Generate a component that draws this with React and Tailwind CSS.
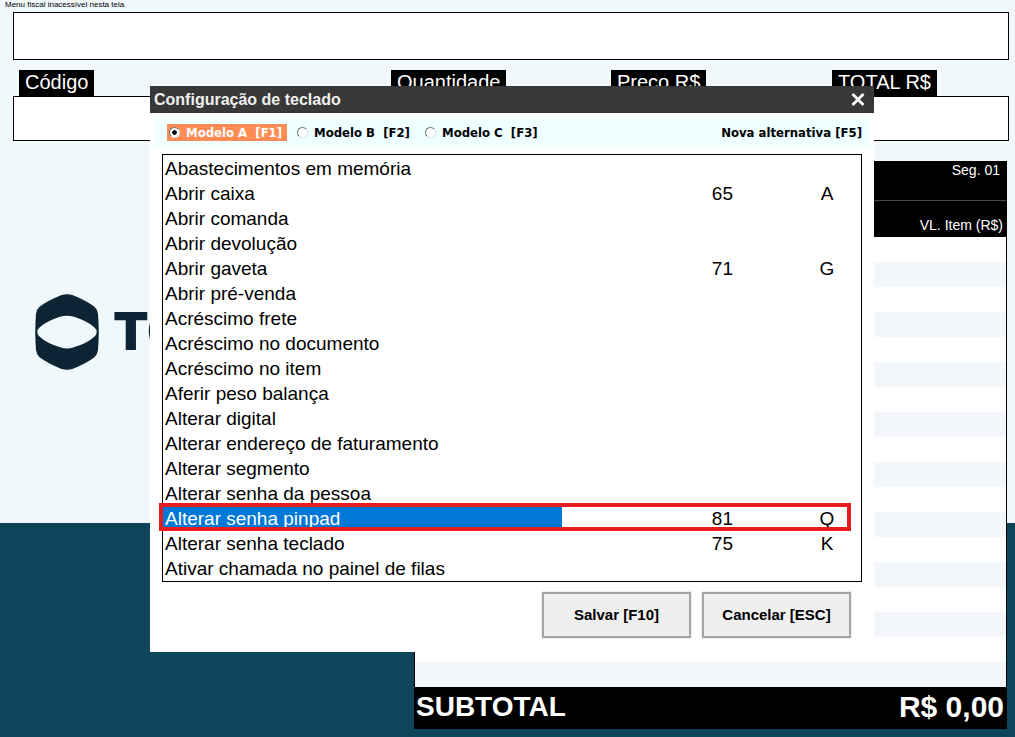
import { useState } from "react";

const COMMANDS = [
  { name: "Abastecimentos em memória" },
  { name: "Abrir caixa", code: 65, key: "A" },
  { name: "Abrir comanda" },
  { name: "Abrir devolução" },
  { name: "Abrir gaveta", code: 71, key: "G" },
  { name: "Abrir pré-venda" },
  { name: "Acréscimo frete" },
  { name: "Acréscimo no documento" },
  { name: "Acréscimo no item" },
  { name: "Aferir peso balança" },
  { name: "Alterar digital" },
  { name: "Alterar endereço de faturamento" },
  { name: "Alterar segmento" },
  { name: "Alterar senha da pessoa" },
  { name: "Alterar senha pinpad", code: 81, key: "Q" },
  { name: "Alterar senha teclado", code: 75, key: "K" },
  { name: "Ativar chamada no painel de filas" },
];

const MODELS = [
  { id: "A", shortcut: "F1" },
  { id: "B", shortcut: "F2" },
  { id: "C", shortcut: "F3" },
];

const FIELDS = ["Código", "Quantidade", "Preço R$", "TOTAL R$"];

function Logo() {
  return (
    <div className="mt-[133px] flex w-[137px] items-center gap-3.5 overflow-hidden pl-[22px] text-[#0c2433]">
      <svg viewBox="0 0 64 76" className="h-[76px] w-16 shrink-0" aria-hidden="true">
        <path
          fill="currentColor"
          fillRule="evenodd"
          d="M26 1.3Q32 -1 38 1.3Q51 6.500 59.500 12.800Q62.500 15.500 63 20Q64.500 38 63 56Q62.500 60.500 59.500 63.200Q51 69.500 38 74.700Q32 77 26 74.700Q13 69.500 4.500 63.200Q1.500 60.500 1 56Q-.5 38 1 20Q1.500 15.500 4.500 12.800Q13 6.500 26 1.300ZM25 22.800Q12 27 5 33Q-.5 38 5 43Q12 49.500 26 53.500Q32 55.500 38 53.500Q52 49.500 59 43Q64.500 38 59 33Q52 27 39 22.800Q32 20.500 25 22.800Z"
        />
      </svg>
      <span className="font-[Inter,sans-serif] text-[52px] leading-none font-black">TO</span>
    </div>
  );
}

function SalePanel() {
  return (
    <section className="flex w-[593px] shrink-0 flex-col border-x border-black bg-white text-white">
      <div className="flex h-[76px] flex-col bg-black text-right text-sm leading-[18px]">
        <p className="h-10 border-b border-[#4a4a4a] pr-[6px]">Seg. 01</p>
        <p className="mt-[15px] pr-[3px]">VL. Item (R$)</p>
      </div>
      <div className="flex-1">
        {Array.from({ length: 18 }, (_, i) => (
          <div key={i} className="h-[25px] even:bg-[#f3f7fc]" />
        ))}
      </div>
      <div className="flex h-[42px] items-center justify-between bg-black pr-0.5 pb-0.5 pl-px font-bold">
        <span className="text-[28px] leading-8">SUBTOTAL</span>
        <span className="text-[30px] leading-8">R$ 0,00</span>
      </div>
    </section>
  );
}

function KeyboardDialog() {
  const [model, setModel] = useState("A");
  const [selected, setSelected] = useState(14);

  return (
    <div
      role="dialog"
      aria-labelledby="dialog-title"
      className="absolute top-[86px] right-[141px] left-[150px] bg-white"
    >
      <header className="flex h-[27px] items-center justify-between bg-[#383838] pr-[9px] pl-1 text-[#f0f0f0]">
        <h1 id="dialog-title" className="text-base leading-5 font-bold">
          Configuração de teclado
        </h1>
        <button type="button" aria-label="Fechar" className="text-white">
          <svg viewBox="0 0 14 13" className="h-[13px] w-[14px]" aria-hidden="true">
            <path d="M1.500 1L12.500 12M12.500 1L1.500 12" stroke="currentColor" strokeWidth="2.800" />
          </svg>
        </button>
      </header>

      <div className="mx-1 mt-[5px] flex h-[29px] items-center justify-between bg-[#f0ffff] pr-2 pl-[13px] font-['DejaVu_Sans_Condensed','DejaVu_Sans',sans-serif] text-[13px] font-bold text-black">
        <div className="flex gap-2">
          {MODELS.map(({ id, shortcut }) => (
            <label
              key={id}
              className="flex h-[17px] w-[120px] items-center gap-1.5 pl-0.5 whitespace-pre has-checked:bg-[#ff8c55] has-checked:text-white"
            >
              <input
                type="radio"
                name="model"
                checked={model === id}
                onChange={() => setModel(id)}
                className="h-[11px] w-[11px] shrink-0 appearance-none rounded-full border border-t-[#707070] border-r-[#e3e3e3] border-b-[#e3e3e3] border-l-[#707070] bg-white checked:bg-[radial-gradient(circle,#000_2px,#fff_2.5px)]"
              />
              {`Modelo ${id}  [${shortcut}]`}
            </label>
          ))}
        </div>
        <button type="button" className="font-bold">Nova alternativa [F5]</button>
      </div>

      <div className="mx-3 mt-[7px] border border-black pt-px">
        <table className="w-full table-fixed border-collapse text-[19px] leading-[25px] text-black">
          <tbody>
            {COMMANDS.map(({ name, code, key }, i) => (
              <tr key={name} className="relative h-[25px]" onClick={() => setSelected(i)}>
                <td
                  className={
                    i === selected
                      ? "w-[399px] bg-[#0078d7] p-0 pl-0.5 text-white"
                      : "w-[399px] p-0 pl-0.5"
                  }
                >
                  {name}
                </td>
                <td className="p-0 pr-[60px] text-right">{code}</td>
                <td className="w-[68px] p-0 text-center">
                  {key}
                  {i === selected && (
                    <span className="pointer-events-none absolute -top-[3px] right-[10px] bottom-0 -left-1 border-4 border-[#e81c1e]" />
                  )}
                </td>
              </tr>
            ))}
          </tbody>
        </table>
      </div>

      <footer className="flex justify-end gap-[11px] pt-[10px] pr-[23px] pb-[14px] text-[15px] font-bold text-black">
        <button type="button" className="h-[46px] w-[149px] border-2 border-[#a5a5a5] bg-[#efefef] ring-1 ring-[#efefef]">
          Salvar [F10]
        </button>
        <button type="button" className="h-[46px] w-[149px] border-2 border-[#a5a5a5] bg-[#efefef] ring-1 ring-[#efefef]">
          Cancelar [ESC]
        </button>
      </footer>
    </div>
  );
}

export default function App() {
  return (
    <div className="relative min-h-screen bg-[linear-gradient(#f0f8fc_71%,#0e455b_71%)] font-['Liberation_Sans',Arial,sans-serif]">
      <main className="flex flex-col pr-1.5 pb-2 pl-[13px]">
        <p className="-ml-2 h-3 text-[8px] leading-[10px] text-black">Menu fiscal inacessível nesta tela</p>
        <output className="h-12 border border-black bg-white" />
        <div className="mt-[10px] grid grid-cols-[372fr_220fr_221fr_177fr] pl-1.5 text-xl leading-6 text-white">
          {FIELDS.map((field) => (
            <span key={field} className="justify-self-start bg-black px-1.5 pb-0.5">
              {field}
            </span>
          ))}
        </div>
        <output className="h-[45px] border border-black bg-white" />
        <div className="mt-5 flex items-start justify-between pr-0.5">
          <Logo />
          <SalePanel />
        </div>
      </main>
      <KeyboardDialog />
    </div>
  );
}
